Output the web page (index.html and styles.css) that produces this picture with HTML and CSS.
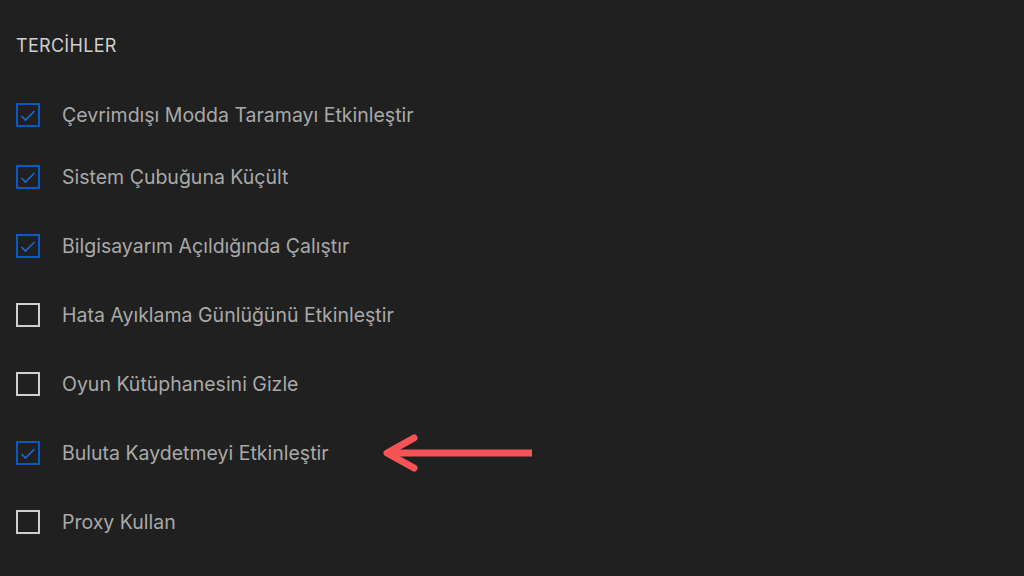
FILE: index.html
```html
<!DOCTYPE html>
<html lang="tr">
<head>
<meta charset="utf-8">
<link rel="stylesheet" href="styles.css">
</head>
<body>
<main class="panel">
  <h2 class="title">TERCİHLER</h2>
  <ul class="prefs">
    <li class="pref first">
      <span class="box checked"><svg viewBox="0 0 24 24"><path d="M5.5 13l4 4 9-9"/></svg></span>
      <span class="label">Çevrimdışı Modda Taramayı Etkinleştir</span>
    </li>
    <li class="pref">
      <span class="box checked"><svg viewBox="0 0 24 24"><path d="M5.5 13l4 4 9-9"/></svg></span>
      <span class="label">Sistem Çubuğuna Küçült</span>
    </li>
    <li class="pref">
      <span class="box checked"><svg viewBox="0 0 24 24"><path d="M5.5 13l4 4 9-9"/></svg></span>
      <span class="label">Bilgisayarım Açıldığında Çalıştır</span>
    </li>
    <li class="pref">
      <span class="box"></span>
      <span class="label">Hata Ayıklama Günlüğünü Etkinleştir</span>
    </li>
    <li class="pref">
      <span class="box"></span>
      <span class="label">Oyun Kütüphanesini Gizle</span>
    </li>
    <li class="pref">
      <span class="box checked"><svg viewBox="0 0 24 24"><path d="M5.5 13l4 4 9-9"/></svg></span>
      <span class="label">Buluta Kaydetmeyi Etkinleştir</span>
      <svg class="arrow" viewBox="0 0 150 40"><path class="shaft" d="M150 20H8"/><path class="head" d="M32 5L5 20l27 15"/></svg>
    </li>
    <li class="pref">
      <span class="box"></span>
      <span class="label">Proxy Kullan</span>
    </li>
  </ul>
</main>
</body>
</html>
```

FILE: styles.css
```css
html, body {
  margin: 0;
  padding: 0;
  background: #202020;
}
body {
  width: 1024px;
  height: 576px;
  overflow: hidden;
  font-family: Inter, "Noto Sans", sans-serif;
}
.panel {
  padding: 35px 16px 0 16px;
}
.title {
  margin: 0;
  font-size: 18px;
  font-weight: 400;
  color: #cfcfcf;
  line-height: 22px;
  letter-spacing: 0.3px;
}
.prefs {
  list-style: none;
  margin: 0;
  padding: 0;
  display: flex;
  flex-direction: column;
  gap: 45px;
}
.pref {
  display: flex;
  align-items: center;
  height: 24px;
}
.pref.first {
  margin-top: 46px;
  margin-bottom: -7px;
}
.box {
  box-sizing: border-box;
  width: 24px;
  height: 24px;
  border: 2px solid #cfcfcf;
  position: relative;
  flex: none;
}
.box.checked {
  border-color: #0b5ac2;
}
.box svg {
  position: absolute;
  left: -2px;
  top: -2px;
  width: 24px;
  height: 24px;
  fill: none;
  stroke: #1b6ad8;
  stroke-width: 1.6;
}
.label {
  margin-left: 22px;
  font-size: 19.5px;
  color: #a9a9a9;
  white-space: nowrap;
}
.arrow {
  margin-left: 53px;
  width: 150px;
  height: 40px;
  flex: none;
  fill: none;
  stroke: #f65356;
  stroke-width: 7;
  stroke-linejoin: round;
}
.arrow .head {
  stroke-linecap: round;
}
```
